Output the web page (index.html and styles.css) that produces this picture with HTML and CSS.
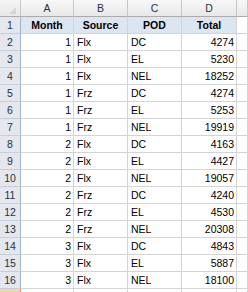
FILE: index.html
```html
<!DOCTYPE html>
<html>
<head>
<meta charset="utf-8">
<link rel="stylesheet" href="styles.css">
</head>
<body>
<div class="sheet">
  <div class="corner"><svg class="tri" width="7" height="7" viewBox="0 0 7 7"><polygon points="7,0 7,7 0,7" fill="#d6d6d6"/></svg></div>
  <div class="ch">A</div><div class="ch">B</div><div class="ch">C</div><div class="ch">D</div><div class="ch"></div>

  <div class="rh">1</div><div class="c hd">Month</div><div class="c hd">Source</div><div class="c hd">POD</div><div class="c hd">Total</div><div class="c"></div>
  <div class="rh">2</div><div class="c n">1</div><div class="c">Flx</div><div class="c">DC</div><div class="c n">4274</div><div class="c"></div>
  <div class="rh">3</div><div class="c n">1</div><div class="c">Flx</div><div class="c">EL</div><div class="c n">5230</div><div class="c"></div>
  <div class="rh">4</div><div class="c n">1</div><div class="c">Flx</div><div class="c">NEL</div><div class="c n">18252</div><div class="c"></div>
  <div class="rh">5</div><div class="c n">1</div><div class="c">Frz</div><div class="c">DC</div><div class="c n">4274</div><div class="c"></div>
  <div class="rh">6</div><div class="c n">1</div><div class="c">Frz</div><div class="c">EL</div><div class="c n">5253</div><div class="c"></div>
  <div class="rh">7</div><div class="c n">1</div><div class="c">Frz</div><div class="c">NEL</div><div class="c n">19919</div><div class="c"></div>
  <div class="rh">8</div><div class="c n">2</div><div class="c">Flx</div><div class="c">DC</div><div class="c n">4163</div><div class="c"></div>
  <div class="rh">9</div><div class="c n">2</div><div class="c">Flx</div><div class="c">EL</div><div class="c n">4427</div><div class="c"></div>
  <div class="rh">10</div><div class="c n">2</div><div class="c">Flx</div><div class="c">NEL</div><div class="c n">19057</div><div class="c"></div>
  <div class="rh">11</div><div class="c n">2</div><div class="c">Frz</div><div class="c">DC</div><div class="c n">4240</div><div class="c"></div>
  <div class="rh">12</div><div class="c n">2</div><div class="c">Frz</div><div class="c">EL</div><div class="c n">4530</div><div class="c"></div>
  <div class="rh">13</div><div class="c n">2</div><div class="c">Frz</div><div class="c">NEL</div><div class="c n">20308</div><div class="c"></div>
  <div class="rh">14</div><div class="c n">3</div><div class="c">Flx</div><div class="c">DC</div><div class="c n">4843</div><div class="c"></div>
  <div class="rh">15</div><div class="c n">3</div><div class="c">Flx</div><div class="c">EL</div><div class="c n">5887</div><div class="c"></div>
  <div class="rh">16</div><div class="c n">3</div><div class="c">Flx</div><div class="c">NEL</div><div class="c n">18100</div><div class="c"></div>
  <div class="rh sel"></div><div class="c"></div><div class="c"></div><div class="c"></div><div class="c"></div><div class="c"></div>
</div>
</body>
</html>
```
FILE: styles.css
```css
html, body {
  margin: 0;
  padding: 0;
  background: #ffffff;
  overflow: hidden;
}
.sheet {
  display: grid;
  grid-template-columns: 21px 53px 54px 54px 55px 1fr;
  grid-template-rows: 17px;
  grid-auto-rows: 17px;
  width: 248px;
  font-family: "Liberation Sans", Arial, sans-serif;
  font-size: 10.5px;
  color: #000;
}
.corner {
  background: linear-gradient(#f4f4f4, #e8e8e8);
  border-right: 1px solid #c6c6c6;
  border-bottom: 1px solid #ababab;
  box-sizing: border-box;
  display: flex;
  align-items: flex-end;
  justify-content: flex-end;
  padding: 0 4px 2px 0;
}
.tri { display: block; }
.ch {
  box-sizing: border-box;
  background: linear-gradient(#f8f8f8, #e8e8e8);
  border-right: 1px solid #c6c6c6;
  border-bottom: 1px solid #ababab;
  color: #27313d;
  text-align: center;
  line-height: 16px;
}
.rh {
  box-sizing: border-box;
  background: #e4e8ee;
  border-right: 1px solid #9eb6ce;
  border-bottom: 1px solid #c5cfdc;
  color: #27313d;
  text-align: center;
  line-height: 17px;
}
.rh.sel {
  background: linear-gradient(#f9d99f, #f1c15f);
  border-right-color: #f29536;
}
.c {
  box-sizing: border-box;
  border-right: 1px solid #d4d4d4;
  border-bottom: 1px solid #d4d4d4;
  padding: 0 3px;
  line-height: 17px;
  white-space: nowrap;
  overflow: hidden;
}
.hd {
  background: #dce6f1;
  font-weight: bold;
  text-align: center;
}
.n { text-align: right; padding-right: 2px; }
```
